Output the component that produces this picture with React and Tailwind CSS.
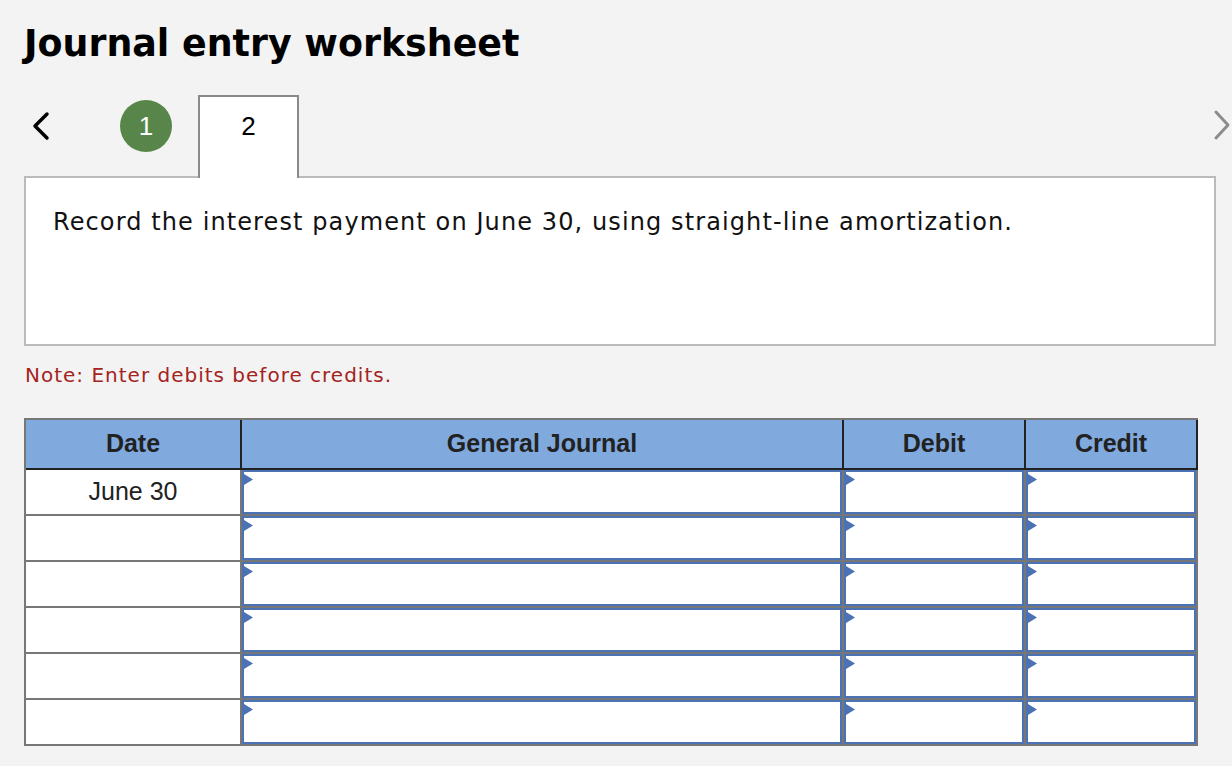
import React from "react";

const cols = ["w-[216px]", "w-[602px]", "w-[182px]", "w-[172px]"];

function Tri() {
  return (
    <svg className="absolute left-0 top-[2px]" width="10" height="11" viewBox="0 0 10 11">
      <polygon points="0,0 9,5.5 0,11" fill="#4a72b5" />
    </svg>
  );
}

function InputCell({ w }) {
  return (
    <div className={`${w} h-[46px] border-r-2 border-b-2 border-[#777]`}>
      <div className="relative w-full h-full border-2 border-[#4a72b5] bg-white">
        <Tri />
      </div>
    </div>
  );
}

export default function App() {
  const rows = ["June 30", "", "", "", "", ""];
  return (
    <div className="min-h-[766px] w-[1232px] bg-[#f3f3f3] pl-[24px] pt-[24px]">
      <h1 className="text-[36.4px] leading-[40px] font-bold text-black" style={{ fontFamily: '"DejaVu Sans", Verdana, sans-serif' }}>
        Journal entry worksheet
      </h1>
      <div className="flex h-[82px] mt-[31px] relative z-10 w-[1208px]">
        <div className="flex items-start pt-[16px] ml-[7px] w-[89px]">
          <svg width="20" height="30" viewBox="0 0 20 30">
            <polyline points="16,3 4,15 16,27" fill="none" stroke="#000" strokeWidth="3.5" strokeLinecap="round" strokeLinejoin="round" />
          </svg>
        </div>
        <div className="flex items-start pt-[5px]">
          <div className="w-[52px] h-[52px] rounded-full bg-[#58864a] text-white flex items-center justify-center text-[26px]" style={{ fontFamily: '"Liberation Sans", Arial, sans-serif' }}>
            1
          </div>
        </div>
        <div className="ml-[26px] w-[101px] h-[83px] border-2 border-b-0 border-[#8a8a8a] bg-white flex justify-center pt-[15px] text-[26px] leading-[28px] text-black" style={{ fontFamily: '"Liberation Sans", Arial, sans-serif' }}>
          2
        </div>
        <div className="flex-1" />
        <div className="flex items-start pt-[14px]">
          <svg width="20" height="32" viewBox="0 0 20 32">
            <polyline points="4,3 16,16 4,29" fill="none" stroke="#8c8c8c" strokeWidth="3" strokeLinecap="round" strokeLinejoin="round" />
          </svg>
        </div>
      </div>
      <div className="w-[1192px] h-[170px] -mt-[1px] border-2 border-[#bbbbbb] bg-white px-[27px] pt-[30px] text-[24px] tracking-[1.1px] leading-[28px] text-[#111]" style={{ fontFamily: '"DejaVu Sans", Verdana, sans-serif' }}>
        Record the interest payment on June 30, using straight-line amortization.
      </div>
      <div className="mt-[17px] ml-[1px] text-[20px] tracking-[1px] leading-[24px] text-[#a4231e]" style={{ fontFamily: '"DejaVu Sans", Verdana, sans-serif' }}>
        Note: Enter debits before credits.
      </div>
      <div className="mt-[31px] w-[1174px] border-l-2 border-t-2 border-[#777]" style={{ fontFamily: '"Liberation Sans", Arial, sans-serif' }}>
        <div className="flex bg-[#80a9de]">
          {["Date", "General Journal", "Debit", "Credit"].map((h, i) => (
            <div key={h} className={`${cols[i]} h-[50px] border-r-2 border-b-2 border-[#222] flex items-center justify-center text-[25px] font-bold text-[#222]`}>
              {h}
            </div>
          ))}
        </div>
        {rows.map((d, r) => (
          <div key={r} className="flex">
            <div className={`${cols[0]} h-[46px] border-r-2 border-b-2 border-[#777] bg-white flex items-center justify-center text-[25px] text-[#222]`}>
              {d}
            </div>
            <InputCell w={cols[1]} />
            <InputCell w={cols[2]} />
            <InputCell w={cols[3]} />
          </div>
        ))}
      </div>
    </div>
  );
}
